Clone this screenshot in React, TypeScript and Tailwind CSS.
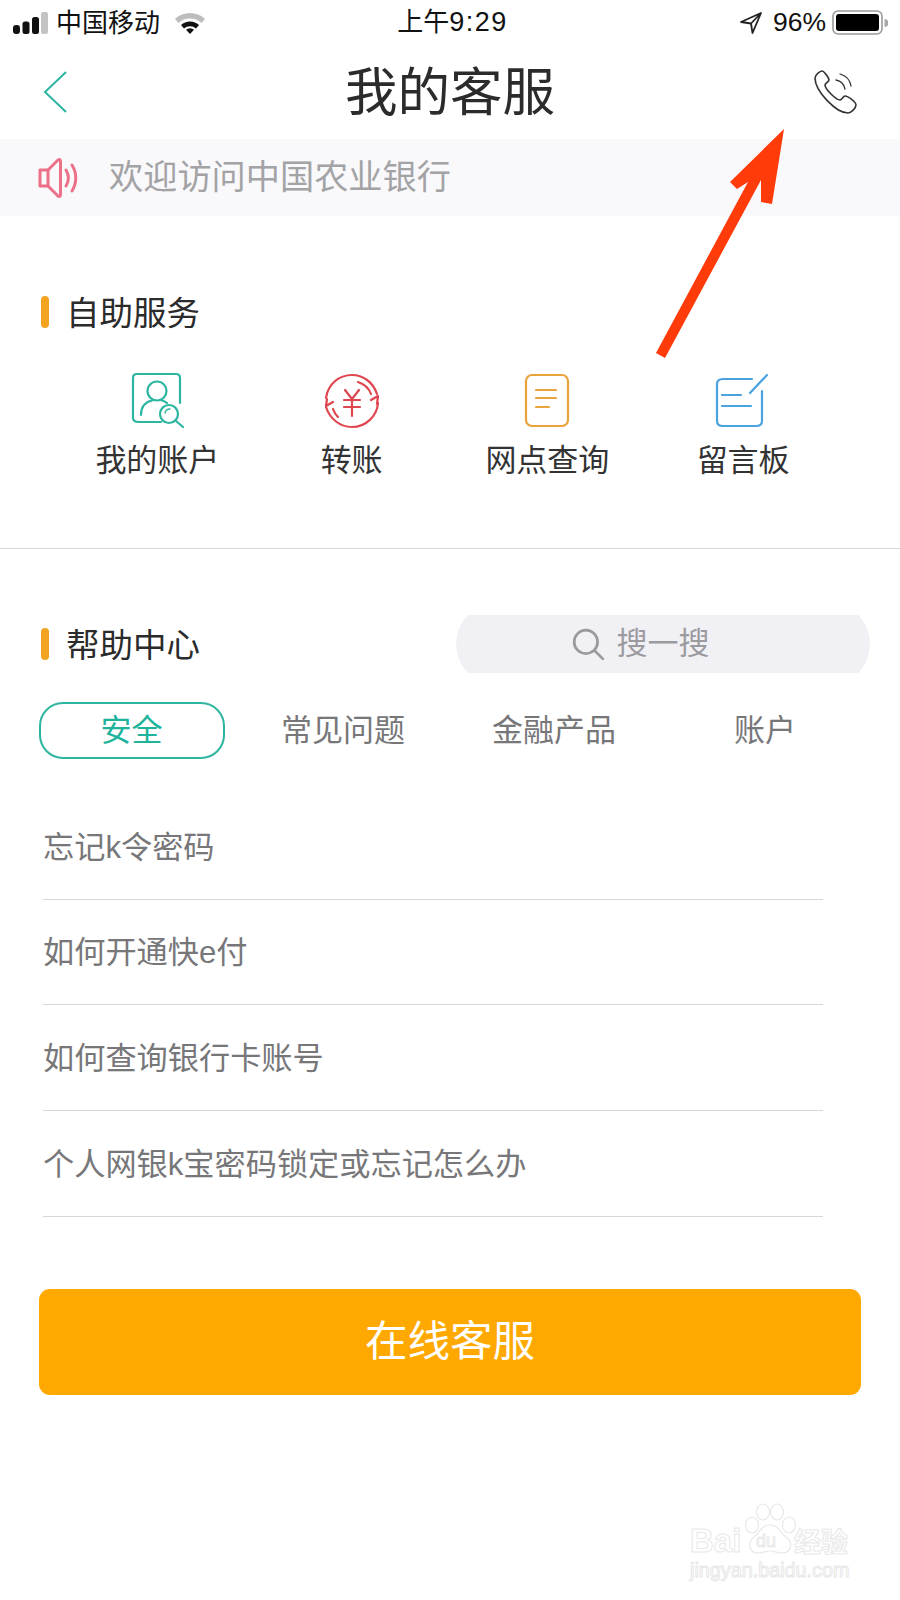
const font = { fontFamily: "'Liberation Sans','Noto Sans CJK SC',sans-serif" };

function Signal() {
  return (
    <svg width="36" height="24" viewBox="0 0 36 24" className="block">
      <rect x="0" y="14" width="7" height="9" rx="3" fill="#111" />
      <rect x="9.5" y="10.5" width="7" height="12.5" rx="2.5" fill="#111" />
      <rect x="19" y="6" width="7" height="17" rx="2.5" fill="#111" />
      <rect x="28" y="1" width="7" height="22" rx="2" fill="#c4c4c4" />
    </svg>
  );
}

function Wifi() {
  return (
    <svg width="32" height="24" viewBox="0 0 32 24" className="block">
      <path d="M1 8 A22 22 0 0 1 31 8 L27.5 12 A17 17 0 0 0 4.5 12 Z" fill="#bdbdbd" />
      <path d="M7 14 A13 13 0 0 1 25 14 L22 17.5 A9 9 0 0 0 10 17.5 Z" fill="#111" />
      <path d="M12 18.8 A6 6 0 0 1 20 18.8 L16 23 Z" fill="#111" />
    </svg>
  );
}

function Location() {
  return (
    <svg width="22" height="22" viewBox="0 0 22 22" className="block">
      <path d="M21 1 L1 10 L11 11.5 L12.5 21 Z M21 1 L11 11.5" fill="none" stroke="#222" strokeWidth="1.8" strokeLinejoin="round" />
    </svg>
  );
}

function Battery() {
  return (
    <svg width="56" height="26" viewBox="0 0 56 26" className="block">
      <rect x="1" y="1" width="49" height="23" rx="5" fill="none" stroke="#9a9a9a" strokeWidth="1.6" />
      <rect x="4" y="4" width="43" height="17" rx="3" fill="#000" />
      <path d="M52.5 9 a4 4 0 0 1 0 8 Z" fill="#a8a8a8" />
    </svg>
  );
}

function Phone() {
  return (
    <svg width="46" height="46" viewBox="0 0 46 46" className="block" fill="none" stroke="#333" strokeWidth="1.6" strokeLinejoin="round" strokeLinecap="round">
      <path d="M3 9 C3 6 8 2 10 2 C12 2 17 9 17 11 C17 13 13 14 13 16 C13 20 24 31 28 31 C30 31 31 27 33 27 C36 27 44 33 44 36 C44 39 39 44 36 44 C24 44 3 22 3 9 Z" />
      <path d="M24 11 C29 12 32 15 33 20" strokeWidth="1.3" />
      <path d="M28 5 C35 7 38 11 39 17" strokeWidth="1.3" />
    </svg>
  );
}

function Speaker() {
  return (
    <svg width="42" height="40" viewBox="0 0 42 40" className="block" fill="none" stroke="#ec7088" strokeWidth="3" strokeLinejoin="round" strokeLinecap="round">
      <path d="M2 12 H10 V28 H2 Z" />
      <path d="M10 12 L20 2 C22 1 22.5 2 22.5 4 V36 C22.5 38 22 39 20 38 L10 28" />
      <path d="M28 12 C31 17 31 23 28 28" />
      <path d="M34 7 C39 15 39 25 34 33" />
    </svg>
  );
}

function AccountIcon() {
  return (
    <svg width="60" height="60" viewBox="-4 0 60 60" className="block" fill="none" stroke="#2cb5a0" strokeWidth="2.2" strokeLinecap="round">
      <path d="M30 51 H8 Q2 51 2 47 V7 Q2 3 6 3 H45 Q49 3 49 7 V32" />
      <circle cx="26" cy="20" r="9.5" />
      <path d="M10 44 C10 36 14 31 21 29.5 M31 29.5 C33 30 35 31 36 32" />
      <circle cx="38" cy="43" r="9" />
      <path d="M34 42 A5 5 0 0 1 39 38" strokeWidth="1.4" />
      <path d="M45 50 L52 56" />
    </svg>
  );
}

function TransferIcon() {
  return (
    <svg width="60" height="60" viewBox="0 0 60 60" className="block" fill="none" stroke="#e0464f" strokeWidth="2.2" strokeLinecap="round" strokeLinejoin="round">
      <path d="M4 27 C6 13 17 4 30 4 C41 4 51 11 55 23" />
      <path d="M36 11 C42 13 47 17 49 23" />
      <path d="M4 36 C8 48 18 56 30 56 C44 56 55 45 56 32" />
      <path d="M11 38 C12 41 14 44 16 46" />
      <path d="M11 31 L4 35 L5 28" />
      <path d="M49 29 L56 25 L55 33" />
      <path d="M23 19 L30 28 L37 19 M22 29 H38 M22 36 H38 M30 28 V45" strokeWidth="2.2" />
    </svg>
  );
}

function DocIcon() {
  return (
    <svg width="60" height="60" viewBox="0 0 60 60" className="block" fill="none" stroke="#e8a33d" strokeWidth="2.2" strokeLinecap="round">
      <rect x="9" y="4" width="42" height="51" rx="6" />
      <path d="M19 19 H39 M19 27 H39 M19 36 H32" />
    </svg>
  );
}

function NoteIcon() {
  return (
    <svg width="60" height="60" viewBox="1 0 60 60" className="block" fill="none" stroke="#4aa3df" strokeWidth="2.2" strokeLinecap="round">
      <path d="M40 8 H11 Q5 8 5 13 V50 Q5 55 11 55 H44 Q50 55 50 50 V20" />
      <path d="M38 22 L55 4" />
      <path d="M10 24 H29 M10 35 H39" />
    </svg>
  );
}

function Search() {
  return (
    <svg width="34" height="34" viewBox="0 0 32 32" className="block" fill="none" stroke="#9a9a9e" strokeWidth="2.6" strokeLinecap="round">
      <circle cx="14" cy="14" r="11" />
      <path d="M22 22 L30 30" />
    </svg>
  );
}

function Title({ children }: { children: string }) {
  return (
    <div className="h-[34px] flex items-center gap-[17px] text-[33.5px] leading-none text-[#2b2b2b]">
      <span className="w-[8px] h-[32px] mb-[5px] rounded-full bg-[#f2a31f]" />
      <span>{children}</span>
    </div>
  );
}

const services = [
  { label: "我的账户", Icon: AccountIcon, cls: "pl-[3px]" },
  { label: "转账", Icon: TransferIcon, cls: "" },
  { label: "网点查询", Icon: DocIcon, cls: "" },
  { label: "留言板", Icon: NoteIcon, cls: "" },
];

const questions = ["忘记k令密码", "如何开通快e付", "如何查询银行卡账号", "个人网银k宝密码锁定或忘记怎么办"];

export default function App() {
  return (
    <div className="relative w-[900px] h-[1600px] bg-white overflow-hidden flex flex-col" style={font}>
      <div className="h-[44px] pt-[1px] grid grid-cols-3 items-center pl-[13px] pr-[12px] text-[26px] leading-none text-[#111]">
        <div className="flex items-center">
          <Signal />
          <span className="ml-[7px]">中国移动</span>
          <span className="ml-[14px]"><Wifi /></span>
        </div>
        <div className="text-center pl-[4px]">
          上午<span className="text-[27px] tracking-[1.5px]">9:29</span>
        </div>
        <div className="flex items-center justify-end">
          <Location />
          <span className="ml-[11px] mr-[6px] text-[26.5px]">96%</span>
          <Battery />
        </div>
      </div>

      <div className="h-[95px] grid grid-cols-[1fr_auto_1fr] items-center pl-[42px] pr-[42px]">
        <svg width="26" height="44" viewBox="0 0 26 44" className="block" fill="none" stroke="#2cb5a0" strokeWidth="2">
          <path d="M24 2 L3 22 L24 42" />
        </svg>
        <div className="pt-[3px] text-[52.5px] leading-none text-[#2b2b2b]">我的客服</div>
        <div className="flex justify-end"><Phone /></div>
      </div>

      <div className="h-[77px] bg-[#f9f9fb] flex items-center pl-[38px] text-[34.2px] leading-none text-[#a3a3a6]">
        <Speaker />
        <span className="ml-[29px]">欢迎访问中国农业银行</span>
      </div>

      <div className="pl-[41px] pt-[81px]">
        <Title>自助服务</Title>
      </div>

      <div className="ml-[58px] w-[783px] grid grid-cols-4 pt-[40px]">
        {services.map(({ label, Icon, cls }) => (
          <div key={label} className={`flex flex-col items-center ${cls}`}>
            <Icon />
            <span className="mt-[10px] text-[31px] leading-[40px] text-[#333]">{label}</span>
          </div>
        ))}
      </div>

      <div className="mt-[67px] h-px bg-[#d8d8d8]" />

      <div className="mt-[66px] pl-[41px] pr-[30px] h-[59px] flex items-center justify-between">
        <div className="pt-[3px]"><Title>帮助中心</Title></div>
        <div className="w-[414px] h-[58px] self-start overflow-hidden flex items-center">
          <div className="w-full h-[84px] shrink-0 rounded-full bg-[#f1f1f5] flex items-center justify-center gap-[12px] pr-[46px] text-[31px] text-[#9b9b9f]">
            <Search />
            <span>搜一搜</span>
          </div>
        </div>
      </div>

      <div className="mt-[28px] ml-[26px] w-[844px] grid grid-cols-4 items-center text-[31px] leading-none text-[#77777a]">
        <div className="flex justify-center">
          <div className="w-[186px] h-[57px] rounded-[24px] border-2 border-[#2cb5a0] text-[#20b39b] flex items-center justify-center">安全</div>
        </div>
        <div className="text-center pl-[1px]">常见问题</div>
        <div className="text-center pl-[1px]">金融产品</div>
        <div className="text-center pl-[1px]">账户</div>
      </div>

      <div className="mt-[35px] ml-[43px] w-[780px] flex flex-col">
        {questions.map((q) => (
          <div key={q} className="h-[105.7px] pt-[2px] flex items-center border-b border-[#d8d8d8] text-[31.2px] leading-none text-[#77777a]">
            {q}
          </div>
        ))}
      </div>

      <div className="mt-[72px] mx-[39px] h-[106px] rounded-[11px] bg-[#ffa800] flex items-center justify-center text-[42.5px] leading-none text-white">
        在线客服
      </div>

      {/* red annotation arrow */}
      <svg width="900" height="1600" viewBox="0 0 900 1600" className="absolute left-0 top-0 pointer-events-none">
        <path d="M784 129 L730 182 L737 189 L748 182 L656 353 L665 358 L761 180 L761 202 L772 204 Z" fill="#ff3b0a" />
      </svg>

      {/* Baidu watermark */}
      <div className="absolute left-0 top-0 w-full h-full pointer-events-none">
        <div className="absolute left-[690px] top-[1524px] text-[33px] leading-none font-bold text-white [-webkit-text-stroke:1px_#e8e8e8]">Bai</div>
        <svg width="52" height="54" viewBox="0 0 52 54" className="absolute left-[744px] top-[1503px]" fill="#fff" stroke="#e8e8e8" strokeWidth="1.2">
          <ellipse cx="8" cy="22" rx="6.5" ry="8" />
          <ellipse cx="19" cy="9" rx="6.5" ry="8" />
          <ellipse cx="33" cy="9" rx="6.5" ry="8" />
          <ellipse cx="45" cy="22" rx="6.5" ry="8" />
          <path d="M26 22 C35 22 36 30 42 34 C50 40 47 50 38 50 C33 50 30 48 26 48 C22 48 19 50 14 50 C5 50 3 40 10 34 C16 30 17 22 26 22 Z" />
        </svg>
        <div className="absolute left-[756px] top-[1532px] text-[18px] leading-none text-white [-webkit-text-stroke:1px_#e8e8e8]">du</div>
        <div className="absolute left-[794px] top-[1530px] text-[27px] leading-none font-bold text-white [-webkit-text-stroke:1px_#e8e8e8]">经验</div>
        <div className="absolute left-[690px] top-[1561px] text-[19.8px] leading-none text-white [-webkit-text-stroke:1px_#e8e8e8]">jingyan.baidu.com</div>
      </div>
    </div>
  );
}
